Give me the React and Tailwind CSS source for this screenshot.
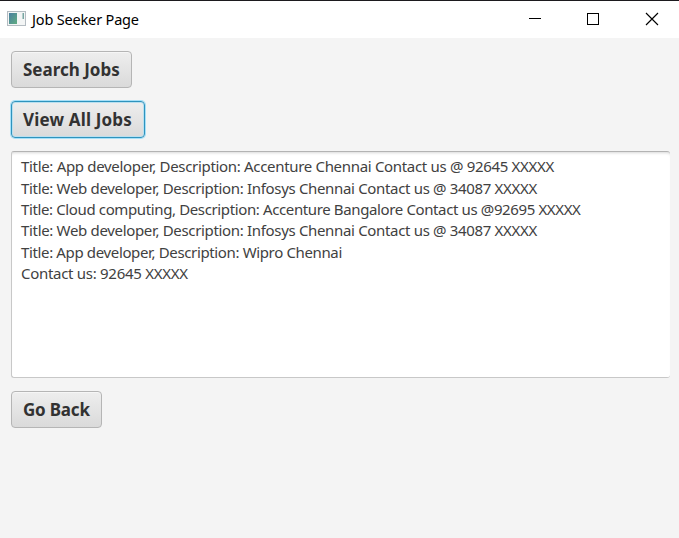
const LINES = [
  { text: 'Title: App developer, Description: Accenture Chennai Contact us @ 92645 XXXXX', cls: 'tracking-[-0.32px]' },
  { text: 'Title: Web developer, Description: Infosys Chennai Contact us @ 34087 XXXXX', cls: 'tracking-[-0.33px]' },
  { text: 'Title: Cloud computing, Description: Accenture Bangalore Contact us @92695 XXXXX', cls: 'tracking-[-0.375px]' },
  { text: 'Title: Web developer, Description: Infosys Chennai Contact us @ 34087 XXXXX', cls: 'tracking-[-0.33px]' },
  { text: 'Title: App developer, Description: Wipro Chennai', cls: 'tracking-[-0.36px]' },
  { text: 'Contact us: 92645 XXXXX', cls: 'tracking-[-0.29px]' },
];

function Button({ className, focused, children }) {
  const edge = focused
    ? 'border-[#2f93bd] shadow-[0_0_0_1px_#a6e0f8,inset_0_0_0_1px_#b9e0f0]'
    : 'border-[#b5b5b5] shadow-[inset_0_1px_0_#f6f6f6]';
  return (
    <button
      className={`flex items-center justify-start whitespace-nowrap rounded-[4px] border bg-linear-to-b from-[#eeeeee] to-[#dadada] pl-[11px] text-[17px] font-bold leading-none text-[#323232] ${edge} ${className}`}
    >
      {children}
    </button>
  );
}

export default function App() {
  return (
    <div className="flex h-[538px] w-[679px] flex-col overflow-hidden bg-[#f4f4f4] font-['Noto_Sans',sans-serif]">
      <header className="flex h-[38px] shrink-0 items-start border-t border-[#1c1a1e] bg-white pl-[7px]">
        <svg width="19" height="15" viewBox="0 0 19 15" className="mt-[10px] shrink-0">
          <defs>
            <linearGradient id="pane" x1="0" y1="0" x2="1" y2="1">
              <stop offset="0" stopColor="#4a7fa0" />
              <stop offset="1" stopColor="#61ad82" />
            </linearGradient>
          </defs>
          <rect x="0.5" y="0.5" width="18" height="14" fill="#f3f5f5" stroke="#b4bcc2" />
          <rect x="2" y="2" width="8" height="11" fill="url(#pane)" />
          <rect x="15.5" y="2" width="1.5" height="6" fill="#78a6a2" />
        </svg>
        <h1 className="ml-[6px] mt-[11px] grow text-[14.5px] leading-none tracking-[-0.17px] text-black">Job Seeker Page</h1>
        <svg width="150" height="37" viewBox="0 0 150 37" fill="none" stroke="#000" className="shrink-0">
          <path d="M0 17.5H12M58.5 12.5h11v11h-11z" shapeRendering="crispEdges" />
          <path d="M117 12l12 12M129 12l-12 12" strokeWidth="1.15" />
        </svg>
      </header>
      <main className="flex flex-col items-start pl-[11px] pt-[13px]">
        <Button className="h-[37px] w-[121px]">Search Jobs</Button>
        <Button focused className="mt-[13px] h-[37px] w-[134px] tracking-[0.17px]">View All Jobs</Button>
        <div className="mt-[13px] h-[227px] w-[659px] rounded-[3px] border-y border-l border-b-[#c8c8c8] border-l-[#c8c8c8] border-t-[#b3b3b3] bg-white pl-[9px] pt-[4.3px] shadow-[inset_0_3px_3px_-2px_#d8d8d8]">
          {LINES.map((line, i) => (
            <p key={i} className={`h-[21.35px] whitespace-pre text-[15px] leading-[21.35px] text-[#414141] ${line.cls}`}>
              {line.text}
            </p>
          ))}
        </div>
        <Button className="mt-[13px] h-[37px] w-[91px] tracking-[-0.2px]">Go Back</Button>
      </main>
    </div>
  );
}
